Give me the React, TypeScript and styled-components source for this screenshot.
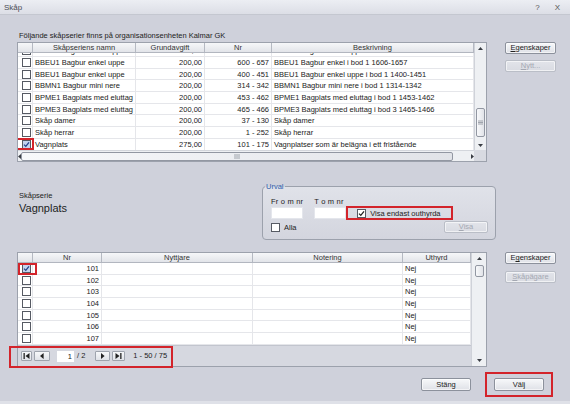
import React from "react";
import styled, { createGlobalStyle } from "styled-components";

const Global = createGlobalStyle`
  html, body { margin: 0; padding: 0; }
  body {
    background: #cfd1db;
    font-family: "Liberation Sans", Arial, sans-serif;
    font-size: 7.5px;
    color: #222;
  }
  * { box-sizing: border-box; }
`;

const Window = styled.div`
  width: 570px;
  height: 404px;
  background: #cfd1db;
  display: flex;
  flex-direction: column;
  overflow: hidden;
  border-bottom: 3px solid #dfe1e8;
`;

const TitleBar = styled.div`
  height: 15px;
  flex: none;
  display: flex;
  align-items: center;
  justify-content: space-between;
  padding: 0 10px 0 4px;
  background: linear-gradient(#eceef3, #dcdee6);
  border-bottom: 1px solid #c4c7d0;
  color: #4a4d55;
  font-size: 8px;
`;

const TitleButtons = styled.div`
  display: flex;
  gap: 15px;
  font-size: 8px;
  color: #555;
`;

const Body = styled.div`
  flex: 1;
  display: flex;
  flex-direction: column;
  padding-left: 17px;
`;

const Caption = styled.div`
  margin-top: 16px;
  height: 11px;
  line-height: 10px;
  padding-left: 2px;
`;

const Section = styled.div`
  display: flex;
  align-items: flex-start;
`;

const SideButtons = styled.div<{ $gap: number }>`
  display: flex;
  flex-direction: column;
  gap: ${(p) => p.$gap}px;
  margin-left: 18px;
`;

const Button = styled.button<{ $disabled?: boolean; $w?: number; $h?: number }>`
  width: ${(p) => p.$w ?? 51}px;
  height: ${(p) => p.$h ?? 12}px;
  padding: 0;
  font-family: inherit;
  font-size: 7.5px;
  line-height: 1;
  color: ${(p) => (p.$disabled ? "#a4a8b2" : "#222")};
  border: 1px solid ${(p) => (p.$disabled ? "#babec7" : "#8c919c")};
  border-radius: 2px;
  background: ${(p) =>
    p.$disabled
      ? "linear-gradient(#e2e4ea, #d9dbe2)"
      : "linear-gradient(#f7f8fa, #dfe1e7)"};
  box-shadow: inset 0 0 0 1px rgba(255, 255, 255, 0.6);
`;

const U = styled.span`
  text-decoration: underline;
`;

/* ---------- grid ---------- */

const Frame = styled.div<{ $rows: string; $sb: number }>`
  display: grid;
  grid-template-columns: 1fr ${(p) => p.$sb}px;
  grid-template-rows: ${(p) => p.$rows};
  width: 470px;
  border: 1px solid #9ca1ac;
  background: #fff;
`;

const HeadRow = styled.div`
  display: flex;
  background: linear-gradient(#f6f7f9, #e2e4e9);
  border-bottom: 1px solid #b2b6bf;
  overflow: hidden;
`;

const HeadCell = styled.div<{ $w: number }>`
  flex: none;
  width: ${(p) => p.$w}px;
  text-align: center;
  line-height: 9px;
  border-right: 1px solid #b5b9c2;
  color: #333;
  white-space: nowrap;
  overflow: hidden;
`;

const RowsArea = styled.div`
  overflow: hidden;
`;

const RowsInner = styled.div<{ $shift: number }>`
  margin-top: ${(p) => -p.$shift}px;
`;

const Row = styled.div`
  display: flex;
  height: 11.7px;
  border-bottom: 1px solid #e5e6ea;
`;

const Cell = styled.div<{ $w: number; $align?: string }>`
  flex: none;
  width: ${(p) => p.$w}px;
  padding: 0 2px;
  text-align: ${(p) => p.$align ?? "left"};
  line-height: 11px;
  border-right: 1px solid #e5e6ea;
  white-space: nowrap;
  overflow: hidden;
`;

const CheckCell = styled.div<{ $w: number }>`
  flex: none;
  width: ${(p) => p.$w}px;
  display: flex;
  align-items: center;
  padding-left: 4px;
  border-right: 1px solid #e5e6ea;
  position: relative;
`;

const Box = styled.span<{ $checked?: boolean; $blue?: boolean }>`
  flex: none;
  width: 9px;
  height: 9px;
  border: 1px solid #565a63;
  background: ${(p) => (p.$blue ? "#c3d4ef" : "#fff")};
  display: flex;
  align-items: center;
  justify-content: center;
`;

const Mark = styled.span<{ $l: number; $t: number; $w: number; $h: number }>`
  position: absolute;
  left: ${(p) => p.$l}px;
  top: ${(p) => p.$t}px;
  width: ${(p) => p.$w}px;
  height: ${(p) => p.$h}px;
  border: 2px solid #d3242b;
  pointer-events: none;
`;

const VScroll = styled.div<{ $span: string }>`
  grid-column: 2;
  grid-row: ${(p) => p.$span};
  display: flex;
  flex-direction: column;
  background: #eef0f3;
  border-left: 1px solid #cfd2d9;
`;

const ArrowBtn = styled.div<{ $size: number }>`
  flex: none;
  height: ${(p) => p.$size}px;
  display: flex;
  align-items: center;
  justify-content: center;
`;

const Track = styled.div`
  flex: 1;
  display: flex;
  flex-direction: column;
  align-items: center;
`;

const Thumb = styled.div<{ $top: number; $len: number; $horizontal?: boolean }>`
  ${(p) =>
    p.$horizontal
      ? `margin-left:${p.$top}px; width:${p.$len}px; height:9px;`
      : `margin-top:${p.$top}px; height:${p.$len}px; width:9px;`}
  border: 1px solid #9297a2;
  border-radius: 2px;
  background: linear-gradient(90deg, #f8f9fb, #e1e3e8);
  display: flex;
  align-items: center;
  justify-content: center;
  flex: none;
`;

const HScroll = styled.div`
  grid-column: 1;
  display: flex;
  align-items: center;
  background: #eef0f3;
  border-top: 1px solid #d3d6dc;
`;

const HTrack = styled.div`
  flex: 1;
  display: flex;
  align-items: center;
`;

const Corner = styled.div`
  grid-column: 2;
  background: #d8dae1;
`;

const Pager = styled.div`
  grid-column: 1;
  display: flex;
  align-items: center;
  gap: 2px;
  padding-left: 3px;
  background: #d6d8e0;
  border-top: 1px solid #c2c5ce;
  position: relative;
`;

const NavBtn = styled.div<{ $w: number }>`
  width: ${(p) => p.$w}px;
  height: 10px;
  border: 1px solid #9fa4ae;
  border-radius: 1px;
  background: linear-gradient(#f7f8fa, #e0e2e8);
  display: flex;
  align-items: center;
  justify-content: center;
`;

const PageInput = styled.div`
  width: 17px;
  height: 11px;
  margin-left: 5px;
  background: #fff;
  text-align: right;
  line-height: 11px;
  padding-right: 2px;
`;

const PagerText = styled.span<{ $ml: number }>`
  margin-left: ${(p) => p.$ml}px;
  line-height: 10px;
  white-space: nowrap;
`;

/* ---------- middle ---------- */

const Middle = styled.div`
  height: 90px;
  display: flex;
`;

const Selected = styled.div`
  width: 245px;
  padding: 29px 0 0 2px;
`;

const SmallLabel = styled.div`
  line-height: 9px;
`;

const BigValue = styled.div`
  margin-top: 2px;
  font-size: 11px;
  line-height: 12px;
  color: #1d1f24;
`;

const GroupBox = styled.fieldset`
  margin: 20px 0 0 0;
  width: 234px;
  height: 58px;
  padding: 7px 7px 0 8px;
  border: 1px solid #9ca1ac;
  border-radius: 4px;
  background: linear-gradient(#e0e2e9, #d3d5de);
  min-width: 0;
`;

const Legend = styled.legend`
  padding: 0 1px;
  margin-left: -6px;
  line-height: 9px;
  color: #2e61ad;
`;

const FieldRow = styled.div`
  display: flex;
  align-items: flex-end;
`;

const Field = styled.div<{ $mr: number }>`
  display: flex;
  flex-direction: column;
  margin-right: ${(p) => p.$mr}px;
`;

const FieldLabel = styled.div`
  line-height: 8px;
  margin-bottom: 1px;
  letter-spacing: 0.2px;
`;

const Input = styled.div`
  width: 32px;
  height: 12px;
  background: #fff;
  border: 1px solid #e4e6ec;
`;

const CheckLabel = styled.label<{ $marked?: boolean }>`
  display: flex;
  align-items: center;
  gap: 4px;
  line-height: 9px;
  ${(p) =>
    p.$marked
      ? `border:2px solid #d3242b; width:107px; height:14px; padding-left:9px; margin-bottom:-1px;`
      : ""}
`;

const BottomRow = styled.div`
  display: flex;
  align-items: center;
  justify-content: space-between;
  margin-top: 2px;
`;

/* ---------- footer ---------- */

const Footer = styled.div`
  display: flex;
  justify-content: flex-end;
  align-items: center;
  padding-right: 17px;
  margin-top: 5px;
`;

const MarkedWrap = styled.div`
  margin-left: 14px;
  padding: 4px 7px;
  border: 2px solid #d3242b;
`;

/* ---------- drawings ---------- */

type Dir = "up" | "down" | "left" | "right";

function Tri({ dir, s = 5, color = "#3a3d44" }: { dir: Dir; s?: number; color?: string }) {
  const h = s * 0.6;
  const pts =
    dir === "up"
      ? `0,${h} ${s / 2},0 ${s},${h}`
      : dir === "down"
      ? `0,0 ${s},0 ${s / 2},${h}`
      : dir === "left"
      ? `${h},0 ${h},${s} 0,${s / 2}`
      : `0,0 0,${s} ${h},${s / 2}`;
  const w = dir === "up" || dir === "down" ? s : h;
  const hh = dir === "up" || dir === "down" ? h : s;
  return (
    <svg width={w} height={hh} viewBox={`0 0 ${w} ${hh}`}>
      <polygon points={pts} fill={color} />
    </svg>
  );
}

function Edge({ dir }: { dir: "first" | "last" }) {
  return (
    <svg width="7" height="6" viewBox="0 0 7 6">
      {dir === "first" ? (
        <>
          <rect x="0.5" y="0" width="1.3" height="6" fill="#222" />
          <polygon points="6.5,0 6.5,6 2.5,3" fill="#222" />
        </>
      ) : (
        <>
          <polygon points="0.5,0 0.5,6 4.5,3" fill="#222" />
          <rect x="5.2" y="0" width="1.3" height="6" fill="#222" />
        </>
      )}
    </svg>
  );
}

function Grip({ horizontal }: { horizontal?: boolean }) {
  return horizontal ? (
    <svg width="6" height="5" viewBox="0 0 6 5">
      <path d="M1 0V5M3 0V5M5 0V5" stroke="#8d929c" strokeWidth="0.8" />
    </svg>
  ) : (
    <svg width="5" height="5" viewBox="0 0 5 5">
      <path d="M0 1H5M0 2.5H5M0 4H5" stroke="#8d929c" strokeWidth="0.8" />
    </svg>
  );
}

function Tick({ color = "#24408a" }: { color?: string }) {
  return (
    <svg width="7" height="7" viewBox="0 0 7 7">
      <path d="M1 3.6L2.8 5.4L6 1.4" stroke={color} strokeWidth="1.3" fill="none" />
    </svg>
  );
}

/* ---------- data ---------- */

const topCols = [15, 103, 69, 67, 202];
const topHead = ["", "Skåpseriens namn", "Grundavgift", "Nr", "Beskrivning"];
const topRows = [
  ["BBEU1 Bagbur enkel uppe", "200,00", "658 - 700", "BBEU1 Bagbur enkel uppe i bod 1 1658-1700"],
  ["BBEU1 Bagbur  enkel uppe", "200,00", "600 - 657", "BBEU1 Bagbur  enkel i bod 1 1606-1657"],
  ["BBEU1 Bagbur enkel uppe", "200,00", "400 - 451", "BBEU1 Bagbur enkel uppe i bod 1 1400-1451"],
  ["BBMN1 Bagbur mini nere", "200,00", "314 - 342", "BBMN1 Bagbur mini nere i bod 1 1314-1342"],
  ["BPME1 Bagplats med eluttag", "200,00", "453 - 462", "BPME1 Bagplats med eluttag i bod 1 1453-1462"],
  ["BPME3 Bagplats med eluttag", "200,00", "465 - 466", "BPME3 Bagplats med eluttag i bod 3 1465-1466"],
  ["Skåp damer", "200,00", "37 - 130", "Skåp damer"],
  ["Skåp herrar", "200,00", "1 - 252", "Skåp herrar"],
  ["Vagnplats", "275,00", "101 - 175", "Vagnplatser som är belägna i ett fristående"],
];

const botCols = [15, 69, 151, 150, 68];
const botHead = ["", "Nr", "Nyttjare", "Notering", "Uthyrd"];
const botRows = ["101", "102", "103", "104", "105", "106", "107"];

export default function App() {
  return (
    <>
      <Global />
      <Window>
        <TitleBar>
          <span>Skåp</span>
          <TitleButtons>
            <span>?</span>
            <span>X</span>
          </TitleButtons>
        </TitleBar>
        <Body>
          <Caption>Följande skåpserier finns på organisationsenheten Kalmar GK</Caption>

          <Section>
            <Frame $rows="10px 97px 11px" $sb={12}>
              <HeadRow>
                {topHead.map((h, i) => (
                  <HeadCell key={i} $w={topCols[i]}>
                    {h}
                  </HeadCell>
                ))}
              </HeadRow>
              <VScroll $span="1 / 3">
                <ArrowBtn $size={10}>
                  <Tri dir="up" />
                </ArrowBtn>
                <Track>
                  <Thumb $top={55} $len={29}>
                    <Grip />
                  </Thumb>
                </Track>
                <ArrowBtn $size={10}>
                  <Tri dir="down" />
                </ArrowBtn>
              </VScroll>
              <RowsArea>
                <RowsInner $shift={7.7}>
                  {topRows.map((r, i) => {
                    const last = i === topRows.length - 1;
                    return (
                      <Row key={i}>
                        <CheckCell $w={topCols[0]}>
                          <Box $blue={last}>{last && <Tick />}</Box>
                          {last && <Mark $l={-3} $t={-1} $w={19} $h={12} />}
                        </CheckCell>
                        <Cell $w={topCols[1]}>{r[0]}</Cell>
                        <Cell $w={topCols[2]} $align="right">
                          {r[1]}
                        </Cell>
                        <Cell $w={topCols[3]} $align="right">
                          {r[2]}
                        </Cell>
                        <Cell $w={topCols[4]}>{r[3]}</Cell>
                      </Row>
                    );
                  })}
                </RowsInner>
              </RowsArea>
              <HScroll>
                <ArrowBtn $size={14}>
                  <Tri dir="left" s={5} />
                </ArrowBtn>
                <HTrack>
                  <Thumb $horizontal $top={0} $len={432}>
                    <Grip horizontal />
                  </Thumb>
                </HTrack>
                <ArrowBtn $size={11}>
                  <Tri dir="right" s={5} />
                </ArrowBtn>
              </HScroll>
              <Corner />
            </Frame>
            <SideButtons $gap={6}>
              <Button>
                <U>E</U>genskaper
              </Button>
              <Button $disabled>
                <U>N</U>ytt...
              </Button>
            </SideButtons>
          </Section>

          <Middle>
            <Selected>
              <SmallLabel>Skåpserie</SmallLabel>
              <BigValue>Vagnplats</BigValue>
            </Selected>
            <GroupBox>
              <Legend>Urval</Legend>
              <FieldRow>
                <Field $mr={11}>
                  <FieldLabel>Fr o m nr</FieldLabel>
                  <Input />
                </Field>
                <Field $mr={0}>
                  <FieldLabel>T o m nr</FieldLabel>
                  <Input />
                </Field>
                <CheckLabel $marked>
                  <Box>
                    <Tick color="#222" />
                  </Box>
                  Visa endast outhyrda
                </CheckLabel>
              </FieldRow>
              <BottomRow>
                <CheckLabel>
                  <Box />
                  Alla
                </CheckLabel>
                <Button $disabled $w={44}>
                  <U>V</U>isa
                </Button>
              </BottomRow>
            </GroupBox>
          </Middle>

          <Section>
            <Frame $rows="10px 82px 21px" $sb={15}>
              <HeadRow>
                {botHead.map((h, i) => (
                  <HeadCell key={i} $w={botCols[i]}>
                    {h}
                  </HeadCell>
                ))}
              </HeadRow>
              <VScroll $span="1 / 4">
                <ArrowBtn $size={10}>
                  <Tri dir="up" />
                </ArrowBtn>
                <Track>
                  <Thumb $top={2} $len={12} />
                </Track>
                <ArrowBtn $size={11}>
                  <Tri dir="down" />
                </ArrowBtn>
              </VScroll>
              <RowsArea>
                {botRows.map((nr, i) => (
                  <Row key={nr}>
                    <CheckCell $w={botCols[0]}>
                      <Box $blue={i === 0}>{i === 0 && <Tick />}</Box>
                      {i === 0 && <Mark $l={0} $t={0} $w={19} $h={12} />}
                    </CheckCell>
                    <Cell $w={botCols[1]} $align="right">
                      {nr}
                    </Cell>
                    <Cell $w={botCols[2]} />
                    <Cell $w={botCols[3]} />
                    <Cell $w={botCols[4]}>Nej</Cell>
                  </Row>
                ))}
              </RowsArea>
              <Pager>
                <NavBtn $w={11}>
                  <Edge dir="first" />
                </NavBtn>
                <NavBtn $w={16}>
                  <Tri dir="left" s={6} color="#222" />
                </NavBtn>
                <PageInput>1</PageInput>
                <PagerText $ml={1}>/ 2</PagerText>
                <NavBtn $w={15} style={{ marginLeft: 8 }}>
                  <Tri dir="right" s={6} color="#222" />
                </NavBtn>
                <NavBtn $w={13}>
                  <Edge dir="last" />
                </NavBtn>
                <PagerText $ml={6}>1 - 50 / 75</PagerText>
                <Mark $l={-9} $t={0} $w={164} $h={22} />
              </Pager>
            </Frame>
            <SideButtons $gap={7}>
              <Button>
                E<U>g</U>enskaper
              </Button>
              <Button $disabled>
                <U>S</U>kåpägare
              </Button>
            </SideButtons>
          </Section>

          <Footer>
            <Button $w={50} $h={13}>
              Stäng
            </Button>
            <MarkedWrap>
              <Button $w={50} $h={13}>
                Väl<U>j</U>
              </Button>
            </MarkedWrap>
          </Footer>
        </Body>
      </Window>
    </>
  );
}
